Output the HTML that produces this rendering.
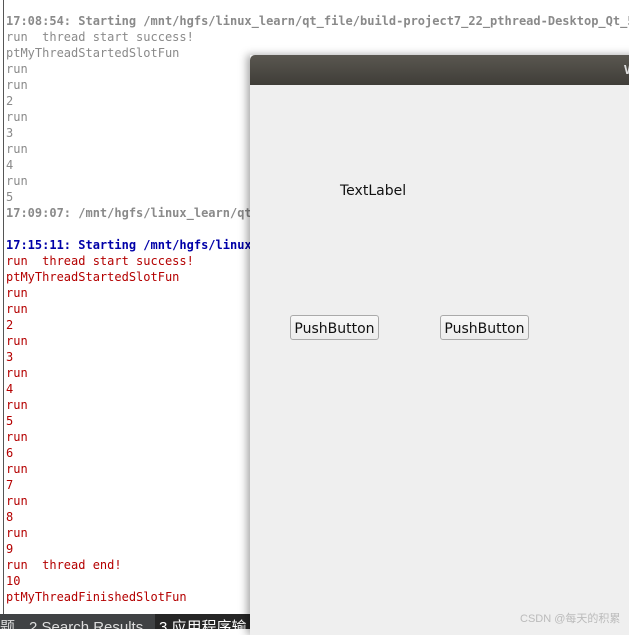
<!DOCTYPE html>
<html><head><meta charset="utf-8"><style>
*{margin:0;padding:0;box-sizing:border-box}
body{width:629px;height:629px;overflow:hidden;background:#fff;position:relative;font-family:"DejaVu Sans Mono","Liberation Mono",monospace}
.vl{position:absolute;left:3px;top:0;width:1px;height:614px;background:#555}
.con{position:absolute;left:6px;top:13px;font-size:12px;line-height:16px;white-space:pre}
.g{color:#8a8a8a}.b{font-weight:bold}.bl{color:#0000a8}.r{color:#b40000}
.bar{position:absolute;left:0;top:614px;width:629px;height:15px;background:#404244;color:#ddd;font-family:"Liberation Sans","Noto Sans CJK SC",sans-serif;font-size:15px;line-height:27px;white-space:nowrap;overflow:hidden}
.bar span{position:absolute;top:0}
.t3{left:155px;width:100px;height:15px;background:#262626;color:#fff;padding-left:4px}
.win{position:absolute;left:250px;top:55px;width:390px;height:580px;background:#efefef;box-shadow:-3px 0 8px rgba(0,0,0,.35)}
.tb{height:30px;background:linear-gradient(#5a5750,#3f3d38);border-radius:5px 5px 0 0;position:relative}
.tb span{position:absolute;left:374px;top:7px;color:#ddd;font:bold 13px "Liberation Sans",sans-serif}
.lbl{position:absolute;left:90px;top:128px;font:14px "DejaVu Sans","Liberation Sans",sans-serif;color:#111}
.btn{position:absolute;top:260px;width:89px;height:25px;border:1px solid #aaa;border-radius:3px;background:linear-gradient(#f8f8f8,#ececec);font:14px "DejaVu Sans","Liberation Sans",sans-serif;color:#111;text-align:center;line-height:26px}
.wm{position:absolute;left:520px;top:610px;font:11px "Liberation Sans","Noto Sans CJK SC",sans-serif;color:#bbb}
</style></head><body>
<div class="vl"></div>
<div class="con"><span class="g b">17:08:54: Starting /mnt/hgfs/linux_learn/qt_file/build-project7_22_pthread-Desktop_Qt_5</span>
<span class="g">run  thread start success!
ptMyThreadStartedSlotFun
run
run
2
run
3
run
4
run
5</span>
<span class="g b">17:09:07: /mnt/hgfs/linux_learn/qt</span>

<span class="bl b">17:15:11: Starting /mnt/hgfs/linux</span>
<span class="r">run  thread start success!
ptMyThreadStartedSlotFun
run
run
2
run
3
run
4
run
5
run
6
run
7
run
8
run
9
run  thread end!
10
ptMyThreadFinishedSlotFun</span></div>
<div class="bar"><span style="left:0">题</span><span style="left:29px">2  Search Results</span><span class="t3">3  应用程序输</span></div>
<div class="win"><div class="tb"><span>W</span></div>
<div class="lbl">TextLabel</div>
<div class="btn" style="left:40px">PushButton</div>
<div class="btn" style="left:190px">PushButton</div>
</div>
<div class="wm">CSDN @每天的积累</div>
</body></html>
